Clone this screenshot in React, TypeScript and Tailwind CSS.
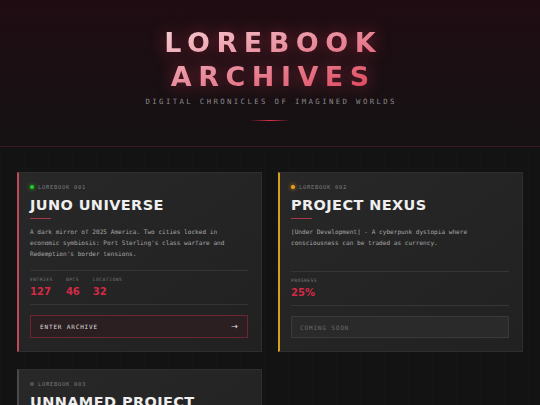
import React from "react";

type Stat = { label: string; value: string };

type Card = {
  id: string;
  title: string;
  desc: string;
  dot: string;
  bar: string;
  stats: Stat[];
  active: boolean;
  button: string;
};

const cards: Card[] = [
  {
    id: "LOREBOOK 001",
    title: "JUNO UNIVERSE",
    desc: "A dark mirror of 2025 America. Two cities locked in economic symbiosis: Port Sterling's class warfare and Redemption's border tensions.",
    dot: "bg-[#22d022] shadow-[0_0_4px_#22d022]",
    bar: "border-l-[#c04858]",
    stats: [
      { label: "ENTRIES", value: "127" },
      { label: "NPCS", value: "46" },
      { label: "LOCATIONS", value: "32" },
    ],
    active: true,
    button: "ENTER ARCHIVE",
  },
  {
    id: "LOREBOOK 002",
    title: "PROJECT NEXUS",
    desc: "[Under Development] - A cyberpunk dystopia where consciousness can be traded as currency.",
    dot: "bg-[#f0a020] shadow-[0_0_4px_#f0a020]",
    bar: "border-l-[#d4a020]",
    stats: [{ label: "PROGRESS", value: "25%" }],
    active: false,
    button: "COMING SOON",
  },
  {
    id: "LOREBOOK 003",
    title: "UNNAMED PROJECT",
    desc: "[Concept Phase] - Details classified.",
    dot: "bg-[#555555]",
    bar: "border-l-[#4a4a4a]",
    stats: [{ label: "PROGRESS", value: "0%" }],
    active: false,
    button: "COMING SOON",
  },
];

function LoreCard({ c }: { c: Card }) {
  return (
    <div
      className={`flex flex-col border border-[#2e2e2e] border-l-2 ${c.bar} bg-linear-to-br from-[#282828] to-[#212121] pt-[10px] pb-[13px] pl-[11px] pr-[13px]`}
    >
      <div className="flex h-[8px] items-center gap-[4px]">
        <span className={`h-[4px] w-[4px] rounded-full ${c.dot}`} />
        <span className="font-['DejaVu_Sans_Mono',monospace] text-[5.5px] leading-[8px] tracking-[0.7px] text-[#7c7c7c]">
          {c.id}
        </span>
      </div>
      <h2 className="mt-[5px] font-['DejaVu_Sans',sans-serif] text-[14.5px] font-bold leading-[18px] tracking-[0.4px] text-[#efefef]">
        {c.title}
      </h2>
      <div className="mt-[4px] h-px w-[21px] bg-[#a33848]" />
      <p className="mt-[7px] max-w-[212px] flex-1 font-['DejaVu_Sans_Mono',monospace] text-[6.1px] leading-[11px] text-[#a6a6a6]">
        {c.desc}
      </p>
      <div className="mt-[11px] border-y border-[#353535] pt-[6px] pb-[6px]">
        <div className="flex gap-[13px]">
          {c.stats.map((s) => (
            <div key={s.label} className="flex flex-col">
              <span className="font-['DejaVu_Sans_Mono',monospace] text-[4.6px] leading-[6px] tracking-[0.5px] text-[#787878]">
                {s.label}
              </span>
              <span className="mt-[3px] font-['DejaVu_Sans',sans-serif] text-[10px] font-bold leading-[12px] text-[#d42a45]">
                {s.value}
              </span>
            </div>
          ))}
        </div>
      </div>
      {c.active ? (
        <div className="mt-[10px] flex h-[23px] items-center justify-between border border-[#6a2633] bg-[#2c1f22] pl-[9px] pr-[9px]">
          <span className="font-['DejaVu_Sans_Mono',monospace] text-[6px] tracking-[0.85px] text-[#dedede]">
            {c.button}
          </span>
          <span className="font-['DejaVu_Sans',sans-serif] text-[8px] text-[#e0e0e0]">→</span>
        </div>
      ) : (
        <div className="mt-[10px] flex h-[22px] items-center border border-[#3a3a3a] bg-[#2a2a2a] pl-[8px]">
          <span className="font-['DejaVu_Sans_Mono',monospace] text-[6px] tracking-[0.85px] text-[#6a6a6a]">
            {c.button}
          </span>
        </div>
      )}
    </div>
  );
}

export default function App() {
  return (
    <div className="min-h-screen bg-[#131313] bg-[linear-gradient(rgba(255,255,255,0.008)_1px,transparent_1px),linear-gradient(90deg,rgba(255,255,255,0.008)_1px,transparent_1px)] bg-[size:24px_24px]">
      <header className="border-b border-[#3a1920] bg-linear-to-b from-[#1f0c12] to-[#151214] pt-[26px] pb-[25px] text-center">
        <h1 className="inline-block bg-linear-to-br from-[#f6d2d8] via-[#e8889a] to-[#dc3a55] bg-clip-text pl-[6.5px] font-['DejaVu_Sans',sans-serif] text-[27px] font-bold leading-[34px] tracking-[6.5px] text-transparent drop-shadow-[0_0_8px_rgba(225,50,80,0.5)]">
          <span className="block">LOREBOOK</span>
          <span className="block">ARCHIVES</span>
        </h1>
        <p className="mt-[2.5px] pl-[2.4px] font-['DejaVu_Sans_Mono',monospace] text-[7.3px] leading-[10px] tracking-[2.4px] text-[#8a8a8a]">
          DIGITAL CHRONICLES OF IMAGINED WORLDS
        </p>
        <div className="mx-auto mt-[13.5px] h-px w-[40px] bg-linear-to-r from-transparent via-[#e03048] to-transparent" />
      </header>
      <main className="grid grid-cols-2 gap-x-4 gap-y-[17px] px-[17px] pt-[25px] pb-[20px]">
        {cards.map((c) => (
          <LoreCard key={c.id} c={c} />
        ))}
      </main>
    </div>
  );
}
